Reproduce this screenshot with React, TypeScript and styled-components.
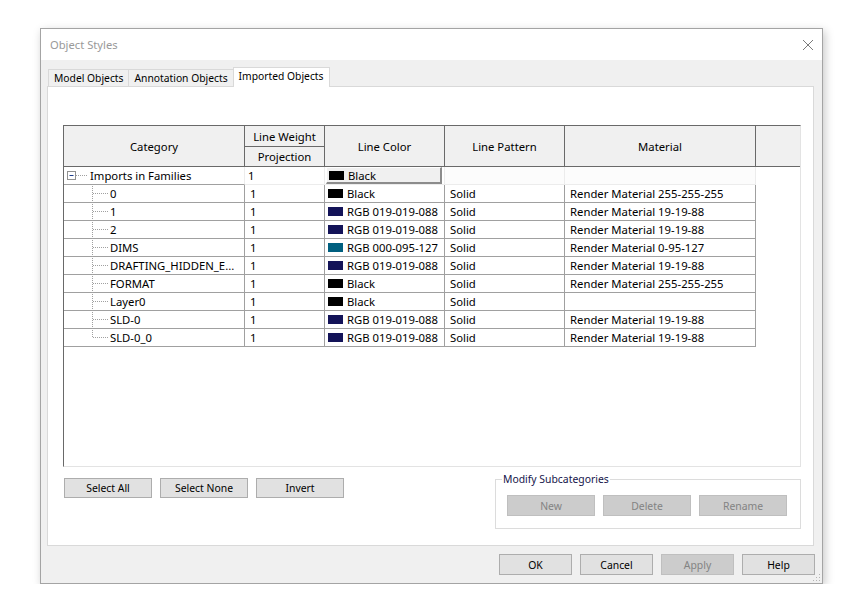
import styled, { createGlobalStyle } from 'styled-components'

const GlobalStyle = createGlobalStyle`
  html, body {
    margin: 0;
    background: #ffffff;
  }
  body {
    font-family: 'Noto Sans', 'Segoe UI', sans-serif;
    font-size: 11.3px;
    color: #000;
  }
`

interface SubRow {
  name: string
  color: string
  swatch: string
  material: string
}

const BLACK = { color: 'Black', swatch: '#000000' }
const NAVY = { color: 'RGB 019-019-088', swatch: '#131358' }
const TEAL = { color: 'RGB 000-095-127', swatch: '#005f7f' }

const rows: SubRow[] = [
  { name: '0', ...BLACK, material: 'Render Material 255-255-255' },
  { name: '1', ...NAVY, material: 'Render Material 19-19-88' },
  { name: '2', ...NAVY, material: 'Render Material 19-19-88' },
  { name: 'DIMS', ...TEAL, material: 'Render Material 0-95-127' },
  { name: 'DRAFTING_HIDDEN_E...', ...NAVY, material: 'Render Material 19-19-88' },
  { name: 'FORMAT', ...BLACK, material: 'Render Material 255-255-255' },
  { name: 'Layer0', ...BLACK, material: '' },
  { name: 'SLD-0', ...NAVY, material: 'Render Material 19-19-88' },
  { name: 'SLD-0_0', ...NAVY, material: 'Render Material 19-19-88' },
]

const COLS = '181px 80px 120px 120px 191px 44px'

export default function App() {
  return (
    <>
      <GlobalStyle />
      <Window>
        <TitleBar>
          <Title>Object Styles</Title>
          <svg width="12" height="12" viewBox="0 0 12 12">
            <path d="M1 1 L11 11 M11 1 L1 11" stroke="#7a7a7a" strokeWidth="1" fill="none" />
          </svg>
        </TitleBar>
        <Body>
          <TabStrip>
            <Tab>Model Objects</Tab>
            <Tab>Annotation Objects</Tab>
            <Tab $active>Imported Objects</Tab>
          </TabStrip>
          <Panel>
            <Grid>
              <Header>
                <HeadCell $rows={2}>Category</HeadCell>
                <HeadCell>Line Weight</HeadCell>
                <HeadCell $rows={2}>Line Color</HeadCell>
                <HeadCell $rows={2}>Line Pattern</HeadCell>
                <HeadCell $rows={2}>Material</HeadCell>
                <HeadCell $rows={2} $last />
                <HeadCell>Projection</HeadCell>
              </Header>

              <DataRow>
                <CatCell $root>
                  <svg width="24" height="17" viewBox="0 0 24 17">
                    <rect x="3.5" y="4.5" width="8" height="8" fill="#fff" stroke="#919191" />
                    <path d="M5.5 8.5 H9.5" stroke="#1c3d8c" />
                    <path d="M12 8.5 H24" stroke="#a0a0a0" strokeDasharray="1 1" />
                  </svg>
                  <span>Imports in Families</span>
                </CatCell>
                <Cell $line="#ececec" $pad={3}>1</Cell>
                <Cell $line="#ececec" $pad={1}>
                  <ColorButton>
                    <Swatch $color="#000" />
                    Black
                  </ColorButton>
                </Cell>
                <Cell $line="#ececec" $shade />
                <Cell $line="#ececec" $shade />
                <Blank />
              </DataRow>

              {rows.map((r, i) => (
                <DataRow key={r.name}>
                  <CatCell>
                    <svg width="17" height="17" viewBox="0 0 17 17">
                      <path
                        d={i === rows.length - 1 ? 'M0.5 -1 V8.5' : 'M0.5 -1 V17'}
                        stroke="#a0a0a0"
                        strokeDasharray="1 1"
                      />
                      <path d="M1 8.5 H16" stroke="#a0a0a0" strokeDasharray="1 1" />
                    </svg>
                    <span>{r.name}</span>
                  </CatCell>
                  <Cell $pad={5}>1</Cell>
                  <Cell $pad={3}>
                    <Swatch $color={r.swatch} />
                    {r.color}
                  </Cell>
                  <Cell $pad={5}>Solid</Cell>
                  <Cell $pad={5}>{r.material}</Cell>
                  <Blank />
                </DataRow>
              ))}
            </Grid>

            <BottomArea>
              <ButtonRow>
                <Button $w={88}>Select All</Button>
                <Button $w={88}>Select None</Button>
                <Button $w={88}>Invert</Button>
              </ButtonRow>
              <GroupBox>
                <Legend>Modify Subcategories</Legend>
                <ButtonRow>
                  <Button $w={88} $h={21} disabled>New</Button>
                  <Button $w={88} $h={21} disabled>Delete</Button>
                  <Button $w={88} $h={21} disabled>Rename</Button>
                </ButtonRow>
              </GroupBox>
            </BottomArea>
          </Panel>
        </Body>
        <Footer>
          <Button $w={73} $h={21}>OK</Button>
          <Button $w={73} $h={21}>Cancel</Button>
          <Button $w={73} $h={21} disabled>Apply</Button>
          <Button $w={73} $h={21}>Help</Button>
        </Footer>
        <Grip width="9" height="9" viewBox="0 0 9 9">
          <g fill="#b4b4b4">
            <rect x="7" y="1" width="1" height="1" />
            <rect x="4" y="4" width="1" height="1" />
            <rect x="7" y="4" width="1" height="1" />
            <rect x="1" y="7" width="1" height="1" />
            <rect x="4" y="7" width="1" height="1" />
            <rect x="7" y="7" width="1" height="1" />
          </g>
        </Grip>
      </Window>
    </>
  )
}

const Window = styled.div`
  position: relative;
  margin: 28px 0 0 40px;
  width: 783px;
  height: 556px;
  box-sizing: border-box;
  border: 1px solid #a4a4a4;
  background: #f0f0f0;
  box-shadow: 2px 3px 9px rgba(0, 0, 0, 0.22);
  display: flex;
  flex-direction: column;
`

const TitleBar = styled.div`
  height: 31px;
  flex: none;
  background: #ffffff;
  display: flex;
  align-items: center;
  justify-content: space-between;
  padding: 0 8px 0 9px;
`

const Title = styled.div`
  color: #999999;
  font-size: 11.2px;
`

const Body = styled.div`
  padding: 7px 0 0 6px;
`

const TabStrip = styled.div`
  display: flex;
  align-items: flex-end;
  height: 19px;
  padding-left: 1px;
`

const Tab = styled.div<{ $active?: boolean }>`
  position: relative;
  box-sizing: border-box;
  height: ${(p) => (p.$active ? '20px' : '17px')};
  margin-bottom: ${(p) => (p.$active ? '-1px' : '0')};
  margin-right: -1px;
  padding: 0 5px;
  border: 1px solid #d9d9d9;
  border-bottom: none;
  background: ${(p) => (p.$active ? '#ffffff' : '#f0f0f0')};
  font-size: 10.3px;
  line-height: ${(p) => (p.$active ? '16px' : '17px')};
  white-space: nowrap;
  z-index: ${(p) => (p.$active ? 1 : 0)};
`

const Panel = styled.div`
  box-sizing: border-box;
  width: 767px;
  height: 460px;
  border: 1px solid #d9d9d9;
  background: #ffffff;
  padding: 38px 0 0 15px;
`

const Grid = styled.div`
  box-sizing: border-box;
  width: 738px;
  height: 342px;
  border-top: 1px solid #696969;
  border-left: 1px solid #696969;
  border-right: 1px solid #e3e3e3;
  border-bottom: 1px solid #e3e3e3;
  background: #ffffff;
`

const Header = styled.div`
  display: grid;
  grid-template-columns: ${COLS};
  grid-template-rows: 21px 20px;
`

const HeadCell = styled.div<{ $rows?: number; $last?: boolean }>`
  grid-row: span ${(p) => p.$rows ?? 1};
  background: #f0f0f0;
  border-right: ${(p) => (p.$last ? 'none' : '1px solid #696969')};
  border-bottom: 1px solid #696969;
  display: flex;
  align-items: center;
  justify-content: center;
  white-space: nowrap;
`

const DataRow = styled.div`
  display: grid;
  grid-template-columns: ${COLS};
  height: 18px;
`

const Cell = styled.div<{ $line?: string; $pad?: number; $shade?: boolean }>`
  display: flex;
  align-items: center;
  padding-left: ${(p) => p.$pad ?? 0}px;
  border-right: 1px solid ${(p) => p.$line ?? '#a0a0a0'};
  border-bottom: 1px solid ${(p) => p.$line ?? '#a0a0a0'};
  background: ${(p) => (p.$shade ? '#fcfcfc' : '#ffffff')};
  white-space: nowrap;
  overflow: hidden;
`

const CatCell = styled.div<{ $root?: boolean }>`
  display: flex;
  align-items: center;
  padding-left: ${(p) => (p.$root ? 0 : 28)}px;
  border-right: 1px solid ${(p) => (p.$root ? '#ececec' : '#a0a0a0')};
  border-bottom: 1px solid #a0a0a0;
  white-space: nowrap;
  overflow: hidden;

  svg {
    flex: none;
    margin-right: ${(p) => (p.$root ? 2 : 1)}px;
  }
`

const Blank = styled.div`
  background: #ffffff;
`

const ColorButton = styled.div`
  box-sizing: border-box;
  width: 116px;
  height: 17px;
  display: flex;
  align-items: flex-end;
  padding: 0 0 0 2px;
  line-height: 13px;
  background: #f0f0f0;
  border-top: 1px solid #ffffff;
  border-left: 1px solid #ffffff;
  border-right: 2px solid #8c8c8c;
  border-bottom: 2px solid #8c8c8c;
`

const Swatch = styled.span<{ $color: string }>`
  display: inline-block;
  flex: none;
  width: 15px;
  height: 9px;
  margin-right: 4px;
  background: ${(p) => p.$color};
  align-self: center;
`

const BottomArea = styled.div`
  width: 738px;
  margin-top: 4px;
  display: flex;
  justify-content: space-between;
  align-items: flex-start;
`

const ButtonRow = styled.div`
  display: flex;
  gap: 8px;
  margin: 7px 0 0 1px;
`

const Button = styled.button<{ $w: number; $h?: number }>`
  box-sizing: border-box;
  width: ${(p) => p.$w}px;
  height: ${(p) => p.$h ?? 20}px;
  padding: 0;
  font-family: inherit;
  font-size: 10.4px;
  color: #000;
  background: #e1e1e1;
  border: 1px solid #adadad;
  border-radius: 0;

  &:disabled {
    background: #cccccc;
    border-color: #bfbfbf;
    color: #838383;
  }
`

const GroupBox = styled.fieldset`
  box-sizing: border-box;
  width: 306px;
  height: 58px;
  margin: 0;
  padding: 0 11px 12px 11px;
  border: 1px solid #dcdcdc;
  min-width: 0;

  ${ButtonRow} {
    margin: 8px 0 0 0;
  }
`

const Legend = styled.legend`
  margin-left: -5px;
  padding: 0 1px;
  font-size: 10.4px;
  line-height: 16px;
  color: #14144a;
`

const Footer = styled.div`
  display: flex;
  justify-content: flex-end;
  gap: 8px;
  padding: 8px 7px 0 0;
`

const Grip = styled.svg`
  position: absolute;
  right: 1px;
  bottom: 1px;
`
